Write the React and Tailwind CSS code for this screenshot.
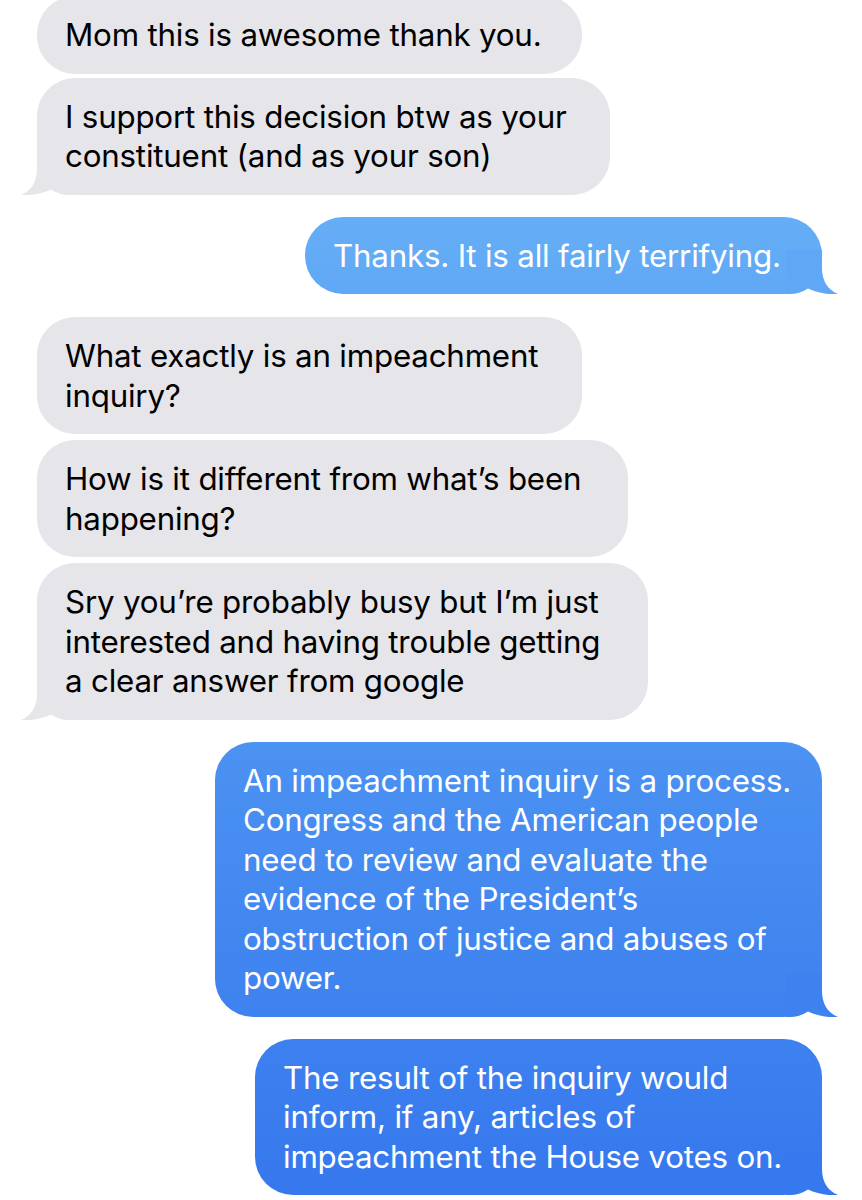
import React from 'react'

const messages = [
  { from: 'them', w: 'w-[545px]', gap: 'mb-[4px]', lines: ['Mom this is awesome thank you.'] },
  { from: 'them', w: 'w-[573px]', gap: 'mb-[22px]', tail: true, lines: ['I support this decision btw as your', 'constituent (and as your son)'] },
  { from: 'me', w: 'w-[517px]', gap: 'mb-[23px]', tail: true, bg: 'bg-gradient-to-b from-[#65aef6] to-[#60a8f5]', tailColor: '#60a8f5', lines: ['Thanks. It is all fairly terrifying.'] },
  { from: 'them', w: 'w-[545px]', gap: 'mb-[6px]', lines: ['What exactly is an impeachment', 'inquiry?'] },
  { from: 'them', w: 'w-[591px]', gap: 'mb-[6px]', lines: ['How is it different from what\u2019s been', 'happening?'] },
  { from: 'them', w: 'w-[611px]', gap: 'mb-[22px]', tail: true, lines: ['Sry you\u2019re probably busy but I\u2019m just', 'interested and having trouble getting', 'a clear answer from google'] },
  { from: 'me', w: 'w-[607px]', gap: 'mb-[22px]', tail: true, bg: 'bg-gradient-to-b from-[#4b92f2] to-[#3e82ef]', tailColor: '#3e82ef', lines: ['An impeachment inquiry is a process.', 'Congress and the American people', 'need to review and evaluate the', 'evidence of the President\u2019s', 'obstruction of justice and abuses of', 'power.'] },
  { from: 'me', w: 'w-[567px]', gap: '', tail: true, bg: 'bg-gradient-to-b from-[#3d80ef] to-[#3678ed]', tailColor: '#3678ed', lines: ['The result of the inquiry would', 'inform, if any, articles of', 'impeachment the House votes on.'] },
]

function Tail({ color, side }) {
  return (
    <svg
      width="52"
      height="44"
      viewBox="0 0 52 44"
      className={
        side === 'right'
          ? 'absolute bottom-0 right-[-16px]'
          : 'absolute bottom-0 left-[-16px] -scale-x-100'
      }
    >
      <path
        d="M0 0 H36 V18 C36 31 42 40 52 44 C44 45 31 43 22 38.5 C16 42.5 10 44 4 44 H0 Z"
        fill={color}
      />
    </svg>
  )
}

function Bubble({ m }) {
  const mine = m.from === 'me'
  return (
    <div className={`flex ${mine ? 'justify-end pr-[40px]' : 'justify-start pl-[37px]'} ${m.gap}`}>
      <div
        className={`relative ${m.w} rounded-[38px] px-[28px] pt-[20px] pb-[18px] ${
          mine ? `${m.bg} text-white` : 'bg-[#e5e5ea] text-black'
        }`}
      >
        <div className="relative z-10 text-[31.3px] leading-[39.5px] tracking-[-0.2px] whitespace-nowrap">
          {m.lines.map((l, i) => (
            <div key={i}>{l}</div>
          ))}
        </div>
        {m.tail && <Tail color={mine ? m.tailColor : '#e5e5ea'} side={mine ? 'right' : 'left'} />}
      </div>
    </div>
  )
}

export default function App() {
  return (
    <div
      className="w-[862px] h-[1200px] overflow-hidden bg-white antialiased"
      style={{ fontFamily: 'Inter, "Noto Sans", sans-serif' }}
    >
      <div className="mt-[-4px]">
        {messages.map((m, i) => (
          <Bubble key={i} m={m} />
        ))}
      </div>
    </div>
  )
}
